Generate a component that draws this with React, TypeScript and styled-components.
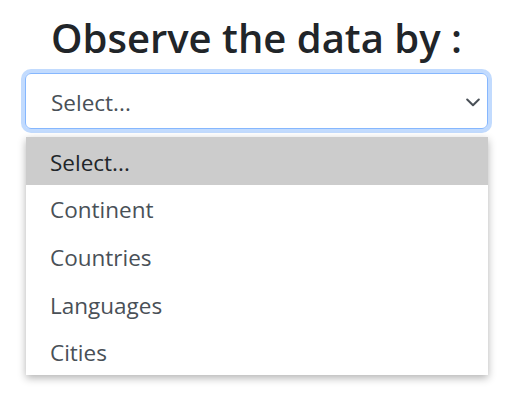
import React from "react";
import styled, { createGlobalStyle } from "styled-components";

const Global = createGlobalStyle`
  html, body { margin: 0; padding: 0; background: #fff; }
  body { font-family: "Open Sans", "Noto Sans", sans-serif; }
`;

const Page = styled.div`
  width: 510px;
  height: 404px;
  box-sizing: border-box;
  padding: 14px 22px 0 25px;
  display: flex;
  flex-direction: column;
`;

const Title = styled.h1`
  margin: 0;
  text-align: center;
  font-size: 40px;
  line-height: 48px;
  font-weight: 600;
  color: #212529;
`;

const SelectBox = styled.div`
  margin-top: 11px;
  height: 56px;
  box-sizing: border-box;
  border: 1px solid #86b7fe;
  border-radius: 6px;
  box-shadow: 0 0 0 4px rgba(13, 110, 253, 0.25);
  display: flex;
  align-items: center;
  justify-content: space-between;
  padding: 2px 7px 0 25px;
  color: #495057;
  font-size: 22.5px;
`;

const Chevron = () => (
  <svg width="14" height="9" viewBox="0 0 14 9" fill="none">
    <path d="M1.2 1.5l5.8 5.8 5.8-5.8" stroke="#495057" strokeWidth="2" strokeLinecap="round" strokeLinejoin="round" />
  </svg>
);

const Menu = styled.ul`
  list-style: none;
  margin: 8px 0 0 1px;
  padding: 0;
  background: #fff;
  box-shadow: 0 3px 8px rgba(0, 0, 0, 0.3);
`;

const Item = styled.li<{ $active?: boolean }>`
  height: 47.6px;
  box-sizing: border-box;
  display: flex;
  align-items: center;
  padding: 3px 0 0 24px;
  font-size: 22.5px;
  color: ${(p) => (p.$active ? "#212529" : "#495057")};
  background: ${(p) => (p.$active ? "#cccccc" : "transparent")};
`;

const options = ["Select...", "Continent", "Countries", "Languages", "Cities"];

export default function App() {
  return (
    <>
      <Global />
      <Page>
        <Title>Observe the data by :</Title>
        <SelectBox>
          <span>Select...</span>
          <Chevron />
        </SelectBox>
        <Menu>
          {options.map((o, i) => (
            <Item key={o} $active={i === 0}>
              {o}
            </Item>
          ))}
        </Menu>
      </Page>
    </>
  );
}
